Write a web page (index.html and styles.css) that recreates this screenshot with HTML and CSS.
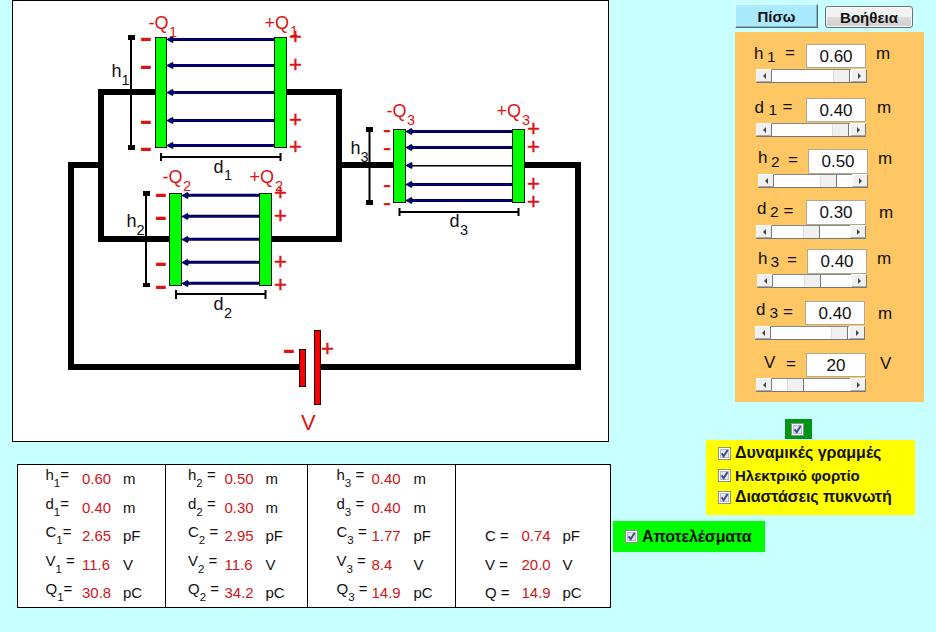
FILE: index.html
```html
<!DOCTYPE html>
<html lang="el">
<head>
<meta charset="utf-8">
<title>Πυκνωτές</title>
<link rel="stylesheet" href="styles.css">
</head>
<body>
<svg class="defs" width="0" height="0">
  <symbol id="check" viewBox="0 0 13 13">
    <rect x=".5" y=".5" width="12" height="12" fill="#fff" stroke="#8e8f8f"/>
    <rect x="2.5" y="2.5" width="8" height="8" fill="#e4e8f0" stroke="#b4bac6"/>
    <path d="M3.6 6.3 L5.6 9.3 L9.6 3" fill="none" stroke="#3a4a8c" stroke-width="1.9"/>
  </symbol>
  <symbol id="head" viewBox="0 0 8 7" overflow="visible">
    <path d="M0 3.5 L5 .8 L6 .8 V6.2 L5 6.2 Z" fill="#0000a0" stroke="#000020" stroke-width=".9"/>
  </symbol>
</svg>
<main class="app">
  <section class="left">
    <svg class="circuit" width="597" height="442" viewBox="12 0 597 442">
      <rect x="12.5" y=".5" width="596" height="441" fill="#fff" stroke="#000"/>
      <g class="wire">
        <path d="M155 92H101V239H170"/>
        <path d="M286 92H339V239H271"/>
        <path d="M101 165H71V367H300"/>
        <path d="M339 165H394"/>
        <path d="M524 165H578V367H320"/>
      </g>
      <g class="measure">
        <path d="M131 37V147M146 193V285M369.5 129V203"/>
        <path d="M161 157H281M161 153V161M280.5 153V161"/>
        <path d="M176 294H266M176 290V299M265.5 290V299"/>
        <path d="M399.5 212H519M399.5 208V216M518.5 208V216"/>
      </g>
      <g>
        <rect x="128" y="35" width="7" height="5"/><rect x="128" y="145" width="7" height="5"/>
        <rect x="143" y="191" width="7" height="5"/><rect x="143" y="283" width="7" height="4"/>
        <rect x="366" y="127" width="7" height="5"/><rect x="366" y="200" width="7" height="5"/>
      </g>
      <g class="field-edge">
        <path d="M170 39.5H275M170 65.5H275M170 92.5H275M170 120.5H275M170 145.5H275"/>
        <path d="M185 195.2H260M185 216.3H260M185 239.2H260M185 262.2H260M185 283.2H260"/>
        <path d="M409 131.5H513M409 147.5H513M409 184.5H513M409 200.5H513"/>
      </g>
      <g class="field">
        <path d="M170 39.5H275M170 65.5H275M170 92.5H275M170 120.5H275M170 145.5H275"/>
        <path d="M185 195.2H260M185 216.3H260M185 239.2H260M185 262.2H260M185 283.2H260"/>
        <path d="M409 131.5H513M409 147.5H513M409 184.5H513M409 200.5H513"/>
      </g>
      <path d="M409 165.8H513" stroke="#000" stroke-width="1.6"/>
      <g>
        <use href="#head" x="167" y="36" width="8" height="7"/><use href="#head" x="167" y="62" width="8" height="7"/><use href="#head" x="167" y="89" width="8" height="7"/><use href="#head" x="167" y="117" width="8" height="7"/><use href="#head" x="167" y="142" width="8" height="7"/>
        <use href="#head" x="182" y="192" width="8" height="7"/><use href="#head" x="182" y="213" width="8" height="7"/><use href="#head" x="182" y="236" width="8" height="7"/><use href="#head" x="182" y="259" width="8" height="7"/><use href="#head" x="182" y="280" width="8" height="7"/>
        <use href="#head" x="406" y="128" width="8" height="7"/><use href="#head" x="406" y="144" width="8" height="7"/><use href="#head" x="406" y="162" width="8" height="7"/><use href="#head" x="406" y="181" width="8" height="7"/><use href="#head" x="406" y="197" width="8" height="7"/>
      </g>
      <g class="plate">
        <rect x="155.500" y="37.500" width="11" height="110"/><rect x="274.500" y="37.500" width="12" height="110"/>
        <rect x="169.500" y="193.500" width="12" height="92"/><rect x="259.500" y="193.500" width="12" height="92"/>
        <rect x="393.500" y="129.500" width="12" height="73"/><rect x="512.500" y="129.500" width="12" height="73"/>
      </g>
      <g class="cell">
        <rect x="299.500" y="349.500" width="6" height="37"/><rect x="314.500" y="330.500" width="6" height="74"/>
      </g>
      <g class="name">
        <text x="111.500" y="77">h<tspan class="idx" x="121.500" y="84.500">1</tspan></text>
        <text x="126.500" y="227">h<tspan class="idx" x="136.500" y="234.500">2</tspan></text>
        <text x="350.500" y="154">h<tspan class="idx" x="360.500" y="161.500">3</tspan></text>
        <text x="213.500" y="172.500">d<tspan class="idx" x="224" y="180">1</tspan></text>
        <text x="213.500" y="310">d<tspan class="idx" x="224" y="317.500">2</tspan></text>
        <text x="449.500" y="227">d<tspan class="idx" x="460" y="234.500">3</tspan></text>
      </g>
      <g class="name charge">
        <text x="148.500" y="29">-Q<tspan class="idx" x="169" y="36.500">1</tspan></text>
        <text x="264.500" y="29">+Q<tspan class="idx" x="290" y="36">1</tspan></text>
        <text x="162.500" y="183">-Q<tspan class="idx" x="183" y="190.500">2</tspan></text>
        <text x="249.500" y="183">+Q<tspan class="idx" x="275" y="190.500">2</tspan></text>
        <text x="386.500" y="117">-Q<tspan class="idx" x="407" y="124.500">3</tspan></text>
        <text x="496.500" y="117">+Q<tspan class="idx" x="522" y="124.500">3</tspan></text>
      </g>
      <g class="minus">
        <text x="139.300" y="50">-</text><text x="139.300" y="78">-</text><text x="139.300" y="133">-</text><text x="139.300" y="160">-</text>
        <text x="154.300" y="206">-</text><text x="154.300" y="229">-</text><text x="154.300" y="275">-</text><text x="154.300" y="298">-</text>
        <text x="282.300" y="362">-</text>
      </g>
      <g class="minus small">
        <text x="383" y="137">-</text><text x="383" y="155">-</text><text x="383" y="192">-</text><text x="383" y="210">-</text>
      </g>
      <g class="plus">
        <text x="289" y="44">+</text><text x="289" y="72">+</text><text x="289" y="127">+</text><text x="289" y="154">+</text>
        <text x="274" y="200">+</text><text x="274" y="223">+</text><text x="274" y="269">+</text><text x="274" y="292">+</text>
        <text x="527" y="136">+</text><text x="527" y="154">+</text><text x="527" y="191">+</text><text x="527" y="209">+</text>
        <text x="321" y="356">+</text>
      </g>
      <text class="source" x="301" y="430">V</text>
    </svg>

    <div class="results">
      <div class="col c1">
        <div class="res"><span>h<sub>1</sub>=</span><b>0.60</b><i>m</i></div>
        <div class="res"><span>d<sub>1</sub>=</span><b>0.40</b><i>m</i></div>
        <div class="res"><span>C<sub>1</sub>=</span><b>2.65</b><i>pF</i></div>
        <div class="res"><span>V<sub>1</sub> =</span><b>11.6</b><i>V</i></div>
        <div class="res"><span>Q<sub>1</sub>=</span><b>30.8</b><i>pC</i></div>
      </div>
      <div class="col c2">
        <div class="res"><span>h<sub>2</sub> =</span><b>0.50</b><i>m</i></div>
        <div class="res"><span>d<sub>2</sub> =</span><b>0.30</b><i>m</i></div>
        <div class="res"><span>C<sub>2</sub> =</span><b>2.95</b><i>pF</i></div>
        <div class="res"><span>V<sub>2</sub> =</span><b>11.6</b><i>V</i></div>
        <div class="res"><span>Q<sub>2</sub> =</span><b>34.2</b><i>pC</i></div>
      </div>
      <div class="col c3">
        <div class="res"><span>h<sub>3</sub> =</span><b>0.40</b><i>m</i></div>
        <div class="res"><span>d<sub>3</sub> =</span><b>0.40</b><i>m</i></div>
        <div class="res"><span>C<sub>3</sub> =</span><b>1.77</b><i>pF</i></div>
        <div class="res"><span>V<sub>3</sub> =</span><b>8.4</b><i>V</i></div>
        <div class="res"><span>Q<sub>3</sub> =</span><b>14.9</b><i>pC</i></div>
      </div>
      <div class="col c4">
        <div class="res"></div>
        <div class="res"></div>
        <div class="res"><span>C =</span><b>0.74</b><i>pF</i></div>
        <div class="res"><span>V =</span><b>20.0</b><i>V</i></div>
        <div class="res"><span>Q =</span><b>14.9</b><i>pC</i></div>
      </div>
    </div>
  </section>

  <section class="right">
    <div class="buttons">
      <button class="back">Πίσω</button>
      <button class="help">Βοήθεια</button>
    </div>
    <div class="panel">
      <div class="control h1">
        <div class="line"><span class="l">h</span><span class="s">1</span><span class="e">=</span><span class="box">0.60</span><span class="u">m</span></div>
        <div class="slider"><span class="arrow prev"></span><span class="track"><span class="thumb"></span></span><span class="arrow next"></span></div>
      </div>
      <div class="control d1">
        <div class="line"><span class="l">d</span><span class="s">1</span><span class="e">=</span><span class="box">0.40</span><span class="u">m</span></div>
        <div class="slider"><span class="arrow prev"></span><span class="track"><span class="thumb"></span></span><span class="arrow next"></span></div>
      </div>
      <div class="control h2">
        <div class="line"><span class="l">h</span><span class="s">2</span><span class="e">=</span><span class="box">0.50</span><span class="u">m</span></div>
        <div class="slider"><span class="arrow prev"></span><span class="track"><span class="thumb"></span></span><span class="arrow next"></span></div>
      </div>
      <div class="control d2">
        <div class="line"><span class="l">d</span><span class="s">2</span><span class="e">=</span><span class="box">0.30</span><span class="u">m</span></div>
        <div class="slider"><span class="arrow prev"></span><span class="track"><span class="thumb"></span></span><span class="arrow next"></span></div>
      </div>
      <div class="control h3">
        <div class="line"><span class="l">h</span><span class="s">3</span><span class="e">=</span><span class="box">0.40</span><span class="u">m</span></div>
        <div class="slider"><span class="arrow prev"></span><span class="track"><span class="thumb"></span></span><span class="arrow next"></span></div>
      </div>
      <div class="control d3">
        <div class="line"><span class="l">d</span><span class="s">3</span><span class="e">=</span><span class="box">0.40</span><span class="u">m</span></div>
        <div class="slider"><span class="arrow prev"></span><span class="track"><span class="thumb"></span></span><span class="arrow next"></span></div>
      </div>
      <div class="control v">
        <div class="line"><span class="l">V</span><span class="s"></span><span class="e">=</span><span class="box">20</span><span class="u">V</span></div>
        <div class="slider"><span class="arrow prev"></span><span class="track"><span class="thumb"></span></span><span class="arrow next"></span></div>
      </div>
    </div>
    <div class="master"><svg class="check"><use href="#check"/></svg></div>
    <div class="options">
      <div class="opt"><svg class="check"><use href="#check"/></svg><span class="o1">Δυναμικές γραμμές</span></div>
      <div class="opt"><svg class="check"><use href="#check"/></svg><span class="o2">Ηλεκτρικό φορτίο</span></div>
      <div class="opt"><svg class="check"><use href="#check"/></svg><span class="o3">Διαστάσεις πυκνωτή</span></div>
    </div>
    <div class="show-results"><svg class="check"><use href="#check"/></svg><span class="o4">Αποτελέσματα</span></div>
  </section>
</main>
</body>
</html>
```
FILE: styles.css
```css
* { box-sizing: border-box; }
body {
  margin: 0;
  background: #c8ffff;
  font-family: "Liberation Sans", Arial, sans-serif;
  color: #111;
}
.defs { display: block; height: 0; }
.app { display: flex; width: 936px; height: 632px; overflow: hidden; }
.left { width: 613px; flex: none; }
.right { width: 323px; flex: none; padding-top: 4px; }

/* circuit */
.circuit { display: block; margin-left: 12px; }
.wire path { fill: none; stroke: #000; stroke-width: 6; }
.measure path { fill: none; stroke: #000; stroke-width: 2; }
.field-edge path { stroke: #000028; stroke-width: 3; }
.field path { stroke: #0000a0; stroke-width: 1.3; }
.plate rect { fill: #00ff00; stroke: #001400; }
.cell rect { fill: #f80000; stroke: #200000; }
.name { font-size: 18px; fill: #111; }
.name .idx { font-size: 14.500px; }
.charge, .minus, .plus, .source { fill: #dc1414; }
.minus { font-size: 40px; }
.minus.small { font-size: 24px; stroke: #dc1414; stroke-width: .3; }
.plus { font-size: 22px; stroke: #dc1414; stroke-width: .5; }
.source { font-size: 22px; }

/* results table */
.results {
  display: grid;
  grid-template-columns: 147px 142px 148px 155px;
  width: 594px;
  height: 144px;
  margin: 22px 0 0 17px;
  background: #fff;
  border: 1px solid #000;
  font-size: 15px;
}
.col { height: 142px; }
.col + .col { border-left: 1px solid #000; }
.res {
  display: grid;
  grid-template-columns: 36.500px 41px auto;
  height: 28.500px;
  line-height: 20px;
  white-space: nowrap;
}
.res b { font-weight: normal; color: #cd1620; padding-top: 4px; }
.res i { font-style: normal; padding-top: 4px; }
.res sub { font-size: 11.500px; line-height: 0; vertical-align: -7px; }
.c1 { padding-left: 27.500px; }
.c2 { padding-left: 22px; }
.c3 { padding-left: 28.500px; }
.c3 .res { grid-template-columns: 35px 42px auto; }
.c4 { padding-left: 29px; }
.c4 .res { padding-top: 4px; }
.c4 .res b, .c4 .res i { padding-top: 0; }

/* buttons */
.buttons { display: flex; align-items: flex-start; gap: 7px; height: 28px; margin-left: 122px; }
.buttons button { font: bold 15px "Liberation Sans", Arial, sans-serif; color: #111; padding: 0; }
.buttons .back {
  width: 83px;
  height: 24px;
  background: #aaeaff;
  border: 1px solid;
  border-color: #e4faff #50707c #50707c #e4faff;
  box-shadow: inset -1px -1px #86b4c4;
}
.buttons .help {
  width: 88px;
  height: 22px;
  margin-top: 2px;
  border: 1px solid #707070;
  border-radius: 3px;
  background: linear-gradient(#f2f2f2 0 48%, #dcdcdc 52%, #cfcfcf);
  box-shadow: inset 0 0 0 1px #f6f6f6;
}

/* parameter panel */
.panel {
  display: grid;
  grid-template-rows: 54px 51px 51px 49px 52px 52px 49px;
  width: 189px;
  height: 370px;
  margin-left: 122px;
  padding-top: 12px;
  background: #ffc664;
}
.control { font-size: 17px; line-height: 20px; }
.line { display: grid; align-items: start; height: 25px; }
.l, .u { padding-top: 1px; }
.s { font-size: 15.500px; }
.box {
  width: 60px;
  height: 24px;
  border: 1px solid #b4a890;
  background: #fff;
  text-align: center;
  line-height: 24px;
}
.slider { display: flex; width: 110px; height: 14px; border-bottom: 1px solid #777; }
.arrow {
  display: flex;
  align-items: center;
  justify-content: center;
  width: 16px;
  height: 13px;
  background: #f0f0f0;
  border: 1px solid;
  border-color: #fff #777 #aaa #fff;
}
.arrow::after { content: ""; border: 3px solid transparent; }
.prev::after { border-right: 3px solid #444; border-left: 0; }
.next::after { border-left: 3px solid #444; border-right: 0; }
.track { width: 78px; height: 13px; background: #fff; border-top: 1px solid #888; }
.thumb {
  display: block;
  width: 17px;
  height: 12px;
  background: #f0f0f0;
  border-right: 1px solid #777;
  border-left: 1px solid #ddd;
}

.h1 .line { margin-left: 19px; grid-template-columns: 13px 18px 21px 70px auto; }
.h1 .l, .h1 .e, .h1 .u { margin-top: -1px; }
.h1 .s { margin-top: 3px; }
.h1 .slider { margin-left: 21px; width: 111px; }
.h1 .track { width: 79px; }
.h1 .thumb { margin-left: 61px; }

.d1 .line { margin-left: 19.500px; grid-template-columns: 14px 14px 23.500px 71px auto; }
.d1 .l, .d1 .u { margin-top: -1px; }
.d1 .s { margin-top: 2px; }
.d1 .e { margin-top: -1px; }
.d1 .slider { margin-left: 21px; }
.d1 .thumb { margin-left: 60px; }

.h2 .line { margin-left: 23px; grid-template-columns: 13px 17px 20px 70px auto; }
.h2 .l { margin-top: -2px; }
.h2 .s { margin-top: 3px; }
.h2 .e { margin-top: 1px; }
.h2 .u { margin-top: -1px; }
.h2 .slider { margin-left: 23px; }
.h2 .thumb { margin-left: 46px; }

.d2 .line { margin-left: 22px; grid-template-columns: 13px 13.500px 22.500px 73px auto; }
.d2 .l { margin-top: -2px; }
.d2 .s, .d2 .u { margin-top: 2px; }
.d2 .e { margin-top: 1px; }
.d2 .slider { margin-left: 21px; }
.d2 .thumb { margin-left: 31px; }

.h3 .line { margin-left: 23px; grid-template-columns: 12.500px 16.500px 20px 70px auto; }
.h3 .l, .h3 .u { margin-top: -1px; }
.h3 .s { margin-top: 3px; }
.h3 .e { margin-top: 1px; }
.h3 .slider { margin-left: 22px; }
.h3 .thumb { margin-left: 31px; }

.d3 .line { margin-left: 21px; grid-template-columns: 13.500px 13.500px 22px 73px auto; }
.d3 .l { margin-top: -2px; }
.d3 .s, .d3 .u { margin-top: 2px; }
.d3 .e { margin-top: 1px; }
.d3 .slider { margin-left: 20px; }
.d3 .thumb { margin-left: 60px; }

.v .line { margin-left: 29px; grid-template-columns: 13px 9px 20px 74px auto; }
.v .l { margin-top: -1px; }
.v .e { margin-top: 1px; }
.v .slider { margin-left: 21px; }
.v .thumb { margin-left: 15px; }

.h2 .box, .d2 .box, .h3 .box { height: 25px; }

/* check boxes */
.check { display: block; flex: none; width: 13px; height: 13px; }
.master {
  width: 27px;
  height: 20px;
  margin: 17px 0 0 172px;
  padding: 4px 0 0 6px;
  background: #009614;
}
.options {
  width: 209px;
  height: 75px;
  margin: 1px 0 0 93px;
  padding: 2px 0 0 12px;
  background: #ffff00;
}
.opt, .show-results { display: flex; align-items: center; gap: 4px; white-space: nowrap; font-weight: bold; font-size: 16px; }
.opt { height: 22px; }
.show-results {
  width: 152px;
  height: 31px;
  margin-top: 6px;
  padding-left: 12px;
  background: #00ff00;
}
.o2 { font-size: 15px; }
.o3, .o4 { letter-spacing: -.1px; }
```
